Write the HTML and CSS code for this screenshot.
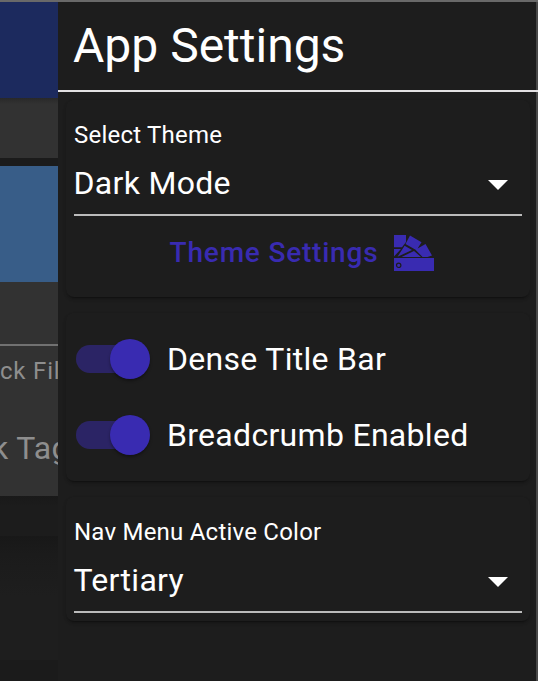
FILE: index.html
```html
<!DOCTYPE html>
<html lang="en">
<head>
<meta charset="utf-8">
<title>App Settings</title>
<link rel="stylesheet" href="styles.css">
</head>
<body>
<div class="screen">
  <div class="backdrop">
    <div class="appbar"></div>
    <div class="toolbar"></div>
    <div class="banner"></div>
    <div class="filters">
      <div class="filter-line"></div>
      <div class="filter-label">ck Fil</div>
      <div class="filter-value">k Tag</div>
    </div>
    <div class="row row-a"></div>
    <div class="row row-b"></div>
    <div class="row row-c"></div>
  </div>
  <aside class="drawer">
    <h1 class="title">App Settings</h1>
    <section class="card card-theme">
      <div class="label">Select Theme</div>
      <div class="select"><span>Dark Mode</span><svg class="caret" viewBox="0 0 20 10"><path d="M0 0h20L10 10z"/></svg></div>
      <div class="theme-button">
        <span>Theme Settings</span>
        <svg class="swatches" viewBox="0 0 40 36">
          <path d="M0 0H12V7L8 12.2H0zM0 14H7L0 21.500zM16 .5L27.500 7.200L22.500 15.300L11.500 9zM10.600 10.800L18 15L3.500 21.800zM31.500 9L38 20.600L33.500 22H28.500L21.500 14.700zM20 15.900L27 22H7.500zM0 23H40V36H0z"/>
          <circle cx="4.700" cy="30.300" r="2.200"/>
        </svg>
      </div>
    </section>
    <section class="card card-switches">
      <div class="switch-row"><div class="switch"><div class="thumb"></div></div><span>Dense Title Bar</span></div>
      <div class="switch-row"><div class="switch"><div class="thumb"></div></div><span>Breadcrumb Enabled</span></div>
    </section>
    <section class="card card-nav">
      <div class="label">Nav Menu Active Color</div>
      <div class="select"><span>Tertiary</span><svg class="caret" viewBox="0 0 20 10"><path d="M0 0h20L10 10z"/></svg></div>
    </section>
  </aside>
</div>
</body>
</html>
```
FILE: styles.css
```css
* { box-sizing: border-box; }
body { margin: 0; background: #1d1d1d; font-family: Roboto, sans-serif; color: #fff; }
.screen {
  display: flex; width: 538px; height: 681px; overflow: hidden;
  border-top: 2px solid #696969;
  white-space: nowrap;
}
.backdrop { width: 58px; flex: none; overflow: hidden; background: #1b1b1b; }
.appbar { height: 96px; background: #1c2a5e; }
.toolbar { height: 60px; background: linear-gradient(#292929, #323232 6px); }
.banner { height: 116px; margin-top: 8px; background: #385d88; }
.filters { height: 214px; background: #323232; color: #8e8e8e; }
.filter-line { height: 64px; border-bottom: 2px solid #717171; }
.filter-label { font-size: 24px; line-height: 28px; margin: 11px 0 0 0; letter-spacing: .8px; }
.filter-value { font-size: 32px; line-height: 38px; margin: 44px 0 0 -8px; letter-spacing: .3px; }
.row-a { height: 40px; background: linear-gradient(#191919, #1c1c1c 10px); }
.row-b { height: 124px; background: linear-gradient(#181818, #1b1b1b 18px, #1e1e1e 60px); }
.row-c { height: 24px; background: #1b1b1b; }
.drawer { flex: 1; background: #1d1d1d; border-right: 2px solid #484848; }
.title {
  margin: 0 -2px 8px 0; padding-left: 15px; height: 90px;
  border-bottom: 2px solid #e2e0e2;
  font-size: 48px; line-height: 88px; font-weight: 400;
}
.card {
  margin: 0 6px 16px 8px; padding: 23px 8px 0; border-radius: 8px;
  box-shadow: 0 3px 2px -2px rgba(0,0,0,.3), 0 2px 3px rgba(0,0,0,.14), 0 2px 5px rgba(0,0,0,.06);
}
.card-theme { height: 197px; }
.card-switches { height: 168px; padding: 8px 10px; }
.card-nav { height: 124px; }
.label { font-size: 24px; line-height: 24px; letter-spacing: .225px; }
.select {
  display: flex; align-items: center; justify-content: space-between;
  height: 69px; padding: 4px 14px 0 0; border-bottom: 2px solid #bbb;
  font-size: 32px; line-height: 64px; letter-spacing: .3px;
}
.select span { margin-left: -.5px; }
.caret { width: 20px; height: 10px; fill: #fff; margin-top: 5px; }
.theme-button {
  display: flex; justify-content: center; align-items: center; gap: 16px;
  height: 72px; padding-left: 8px;
  color: #392bb1; font-size: 28px; font-weight: 500; letter-spacing: .8px;
}
.swatches { width: 40px; height: 36px; margin-top: 2px; fill: #392bb1; }
.swatches circle { fill: none; stroke: #1d1d1d; stroke-width: 1.2; }
.switch-row {
  display: flex; align-items: center; gap: 17px;
  height: 76px; font-size: 32px; letter-spacing: .3px;
}
.switch {
  display: flex; align-items: center; justify-content: flex-end;
  width: 74px; height: 28px; border-radius: 14px;
  background: linear-gradient(90deg, #2b2465 60px, transparent 60px);
}
.thumb {
  width: 40px; height: 40px; flex: none; border-radius: 50%;
  background: #392bb1; box-shadow: 0 2px 3px rgba(0,0,0,.35);
}
```
